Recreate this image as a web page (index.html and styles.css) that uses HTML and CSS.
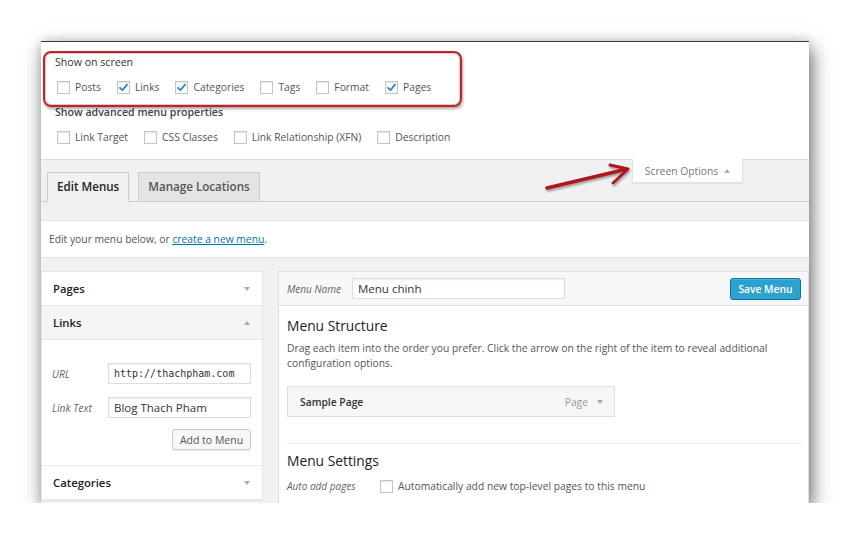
FILE: index.html
```html
<!DOCTYPE html>
<html>
<head>
<meta charset="utf-8">
<title>Menus</title>
<link rel="stylesheet" href="styles.css">
</head>
<body>
<div class="shot">
  <div class="screen-opts">
    <div class="legend">Show on screen</div>
    <div class="cb-row">
      <span class="opt"><span class="cb"></span>Posts</span>
      <span class="opt"><span class="cb"><svg viewBox="0 0 13 13"><path d="M3 6.8 L5.4 9.2 L10 3.6"/></svg></span>Links</span>
      <span class="opt"><span class="cb"><svg viewBox="0 0 13 13"><path d="M3 6.8 L5.4 9.2 L10 3.6"/></svg></span>Categories</span>
      <span class="opt"><span class="cb"></span>Tags</span>
      <span class="opt"><span class="cb"></span>Format</span>
      <span class="opt"><span class="cb"><svg viewBox="0 0 13 13"><path d="M3 6.8 L5.4 9.2 L10 3.6"/></svg></span>Pages</span>
    </div>
    <div class="legend strong">Show advanced menu properties</div>
    <div class="cb-row">
      <span class="opt"><span class="cb"></span>Link Target</span>
      <span class="opt"><span class="cb"></span>CSS Classes</span>
      <span class="opt"><span class="cb"></span>Link Relationship (XFN)</span>
      <span class="opt"><span class="cb"></span>Description</span>
    </div>
  </div>
  <div class="red-box"></div>
  <svg class="arrow" viewBox="0 0 95 35" width="95" height="35">
    <path class="shaft" d="M7 29 L85 10.5"/>
    <path class="head" d="M70 6 L88 10 L73 24"/>
  </svg>

  <div class="wrap">
    <div class="meta-tab">Screen Options <span class="tri-up"></span></div>
    <div class="tabs">
      <span class="tab active">Edit Menus</span>
      <span class="tab">Manage Locations</span>
    </div>
    <div class="manage">Edit your menu below, or&nbsp;<a href="#">create a new menu</a>.</div>
    <div class="cols">
      <div class="side">
        <div class="acc-head">Pages <span class="tri-down"></span></div>
        <div class="acc-head open">Links <span class="tri-up"></span></div>
        <div class="acc-body">
          <div class="field"><span class="flabel">URL</span><span class="input mono">http://thachpham.com</span></div>
          <div class="field"><span class="flabel">Link Text</span><span class="input">Blog Thach Pham</span></div>
          <div class="btn-row"><span class="btn">Add to Menu</span></div>
        </div>
        <div class="acc-head">Categories <span class="tri-down"></span></div>
      </div>
      <div class="main">
        <div class="menu-head">
          <span class="mlabel">Menu Name</span>
          <span class="input name">Menu chinh</span>
          <span class="btn-primary">Save Menu</span>
        </div>
        <div class="menu-body">
          <h3>Menu Structure</h3>
          <p class="desc">Drag each item into the order you prefer. Click the arrow on the right of the item to reveal additional configuration options.</p>
          <div class="item">
            <span class="item-title">Sample Page</span>
            <span class="item-type">Page <span class="tri-down"></span></span>
          </div>
          <div class="divider"></div>
          <h3 class="settings">Menu Settings</h3>
          <div class="auto-row">
            <span class="mlabel wide">Auto add pages</span>
            <span class="opt"><span class="cb"></span>Automatically add new top-level pages to this menu</span>
          </div>
        </div>
      </div>
    </div>
  </div>
</div>
</body>
</html>
```
FILE: styles.css
```css
* { box-sizing: border-box; }
html, body { margin: 0; padding: 0; background: #fff; }
body {
  font-family: "Open Sans", "Noto Sans", sans-serif;
  font-size: 10.3px;
  color: #444;
}
.shot {
  position: relative;
  margin: 41px 0 0 41px;
  width: 768px;
  height: 462px;
  overflow: hidden;
  background: #f1f1f1;
  border-top: 1px solid #3a3a3a;
  box-shadow: 3px 7px 18px rgba(0,0,0,0.55), 0 0 10px rgba(0,0,0,0.12);
}
/* screen options */
.screen-opts {
  background: #fff;
  height: 118px;
  border-bottom: 1px solid #dcdcdc;
  padding: 13px 14px 0;
}
.legend { line-height: 14px; color: #333; font-size: 10.6px; }
.legend.strong { font-weight: 600; margin-top: 8px; color: #444; }
.cb-row {
  display: flex;
  align-items: center;
  height: 20px;
  margin-top: 8px;
  padding-left: 2px;
  gap: 16px;
  color: #555;
}
.opt { display: flex; align-items: center; gap: 5px; }
.cb {
  width: 13px; height: 13px;
  border: 1px solid #c4c4c4;
  background: #fff;
  box-shadow: inset 0 1px 2px rgba(0,0,0,0.1);
  display: inline-flex;
  flex: none;
}
.cb svg { width: 13px; height: 13px; margin: -1px; }
.cb path { fill: none; stroke: #1e8cbe; stroke-width: 1.8; stroke-linecap: round; stroke-linejoin: round; }
.red-box {
  position: absolute;
  left: 2px; top: 9px;
  width: 419px; height: 56px;
  border: 2px solid #b8262c;
  border-radius: 8px;
  box-shadow: inset 0 0 0 1px rgba(235,140,140,0.55), 1px 2px 3px rgba(0,0,0,0.35);
}
.arrow {
  position: absolute;
  left: 499px; top: 117px;
  filter: drop-shadow(1px 2px 1px rgba(0,0,0,0.35));
  z-index: 3;
}
.arrow path { fill: none; stroke: #b0161d; stroke-linecap: round; stroke-linejoin: round; }
.arrow .shaft { stroke-width: 3.4; }
.arrow .head { stroke-width: 3; }

.wrap { position: relative; }
.meta-tab {
  position: absolute;
  right: 66px; top: -1px;
  width: 111px; height: 24px;
  background: #fff;
  border: 1px solid #e2e2e2;
  border-top: none;
  box-shadow: 0 1px 1px rgba(0,0,0,0.05);
  display: flex; align-items: center; justify-content: center; gap: 6px;
  color: #777;
  font-size: 10.3px;
  z-index: 2;
}
.tri-up, .tri-down {
  display: inline-block;
  width: 0; height: 0;
  border-left: 3.5px solid transparent;
  border-right: 3.5px solid transparent;
}
.tri-up { border-bottom: 4px solid #aaa; }
.tri-down { border-top: 4px solid #aaa; }

.tabs {
  display: flex;
  gap: 9px;
  padding: 12px 0 0 6px;
  border-bottom: 1px solid #ccc;
  height: 42px;
}
.tab {
  height: 30px;
  padding: 0 9px;
  border: 1px solid #ccc;
  background: #e4e4e4;
  color: #555;
  font-weight: 600;
  font-size: 11.6px;
  line-height: 28px;
}
.tab.active {
  background: #f1f1f1;
  border-bottom-color: #f1f1f1;
  color: #222;
}
.manage {
  margin-top: 18px;
  height: 38px;
  background: #fff;
  border-top: 1px solid #e5e5e5;
  border-bottom: 1px solid #e5e5e5;
  padding: 0 8px;
  display: flex; align-items: center;
  color: #555;
}
.manage a { color: #0074a2; }

.cols { display: flex; gap: 15px; margin-top: 13px; align-items: flex-start; }
.side {
  width: 222px; flex: none;
  background: #fff;
  border: 1px solid #e5e5e5;
}
.acc-head {
  height: 34px;
  border-bottom: 1px solid #e8e8e8;
  padding: 0 12px 0 11px;
  display: flex; align-items: center; justify-content: space-between;
  font-size: 11.3px; font-weight: 600; color: #222;
}
.acc-head.open { background: #f5f5f5; }
.acc-body {
  padding: 23px 11px 15px 10px;
  border-bottom: 1px solid #e8e8e8;
}
.field { display: flex; align-items: center; margin-bottom: 13px; }
.field + .field { margin-bottom: 11px; }
.flabel { width: 56px; font-style: italic; color: #666; font-size: 10.3px; }
.input {
  height: 21px;
  border: 1px solid #ddd;
  background: #fff;
  box-shadow: inset 0 1px 2px rgba(0,0,0,0.07);
  padding: 0 5px;
  display: flex; align-items: center;
  color: #333;
  font-size: 11.5px;
}
.field .input { width: 143px; }
.input.mono { font-family: "DejaVu Sans Mono", "Liberation Mono", monospace; font-size: 10px; }
.btn-row { display: flex; justify-content: flex-end; }
.btn {
  width: 79px; height: 21px;
  border: 1px solid #ccc;
  border-radius: 3px;
  background: #f7f7f7;
  box-shadow: 0 1px 0 rgba(0,0,0,0.08);
  color: #555;
  font-size: 10.5px;
  display: flex; align-items: center; justify-content: center;
}
.main {
  flex: 1;
  background: #fff;
  border: 1px solid #dfdfdf;
  height: 240px;
}
.menu-head {
  height: 34px;
  background: #f7f7f7;
  border-bottom: 1px solid #dfdfdf;
  display: flex; align-items: center;
  padding: 0 7px 0 8px;
}
.mlabel { width: 65px; font-style: italic; color: #666; font-size: 10px; }
.mlabel.wide { width: 93px; }
.input.name { width: 213px; height: 21px; }
.btn-primary {
  margin-left: auto;
  width: 71px; height: 22px;
  background: #2ea2cc;
  border: 1px solid #0074a2;
  border-radius: 3px;
  box-shadow: inset 0 1px 0 rgba(120,200,230,0.5);
  color: #fff;
  font-weight: 600;
  font-size: 10.3px;
  display: flex; align-items: center; justify-content: center;
}
.menu-body { padding: 0 7px 0 8px; }
h3 {
  margin: 11px 0 0;
  font-size: 13.8px;
  font-weight: 500;
  line-height: 18px;
  color: #222;
}
.desc {
  margin: 6px 0 0;
  line-height: 15px;
  font-size: 10.3px;
  color: #555;
}
.item {
  margin-top: 15px;
  width: 328px; height: 31px;
  background: #f6f6f6;
  border: 1px solid #dfdfdf;
  display: flex; align-items: center; justify-content: space-between;
  padding: 0 11px 0 12px;
}
.item-title { font-weight: 600; color: #333; font-size: 10.3px; }
.item-type { color: #999; font-size: 10.3px; display: flex; align-items: center; gap: 9px; }
.divider { margin-top: 26px; border-top: 1px solid #eee; }
h3.settings { margin-top: 8px; }
.auto-row { display: flex; align-items: center; margin-top: 8px; height: 16px; color: #555; }
```
